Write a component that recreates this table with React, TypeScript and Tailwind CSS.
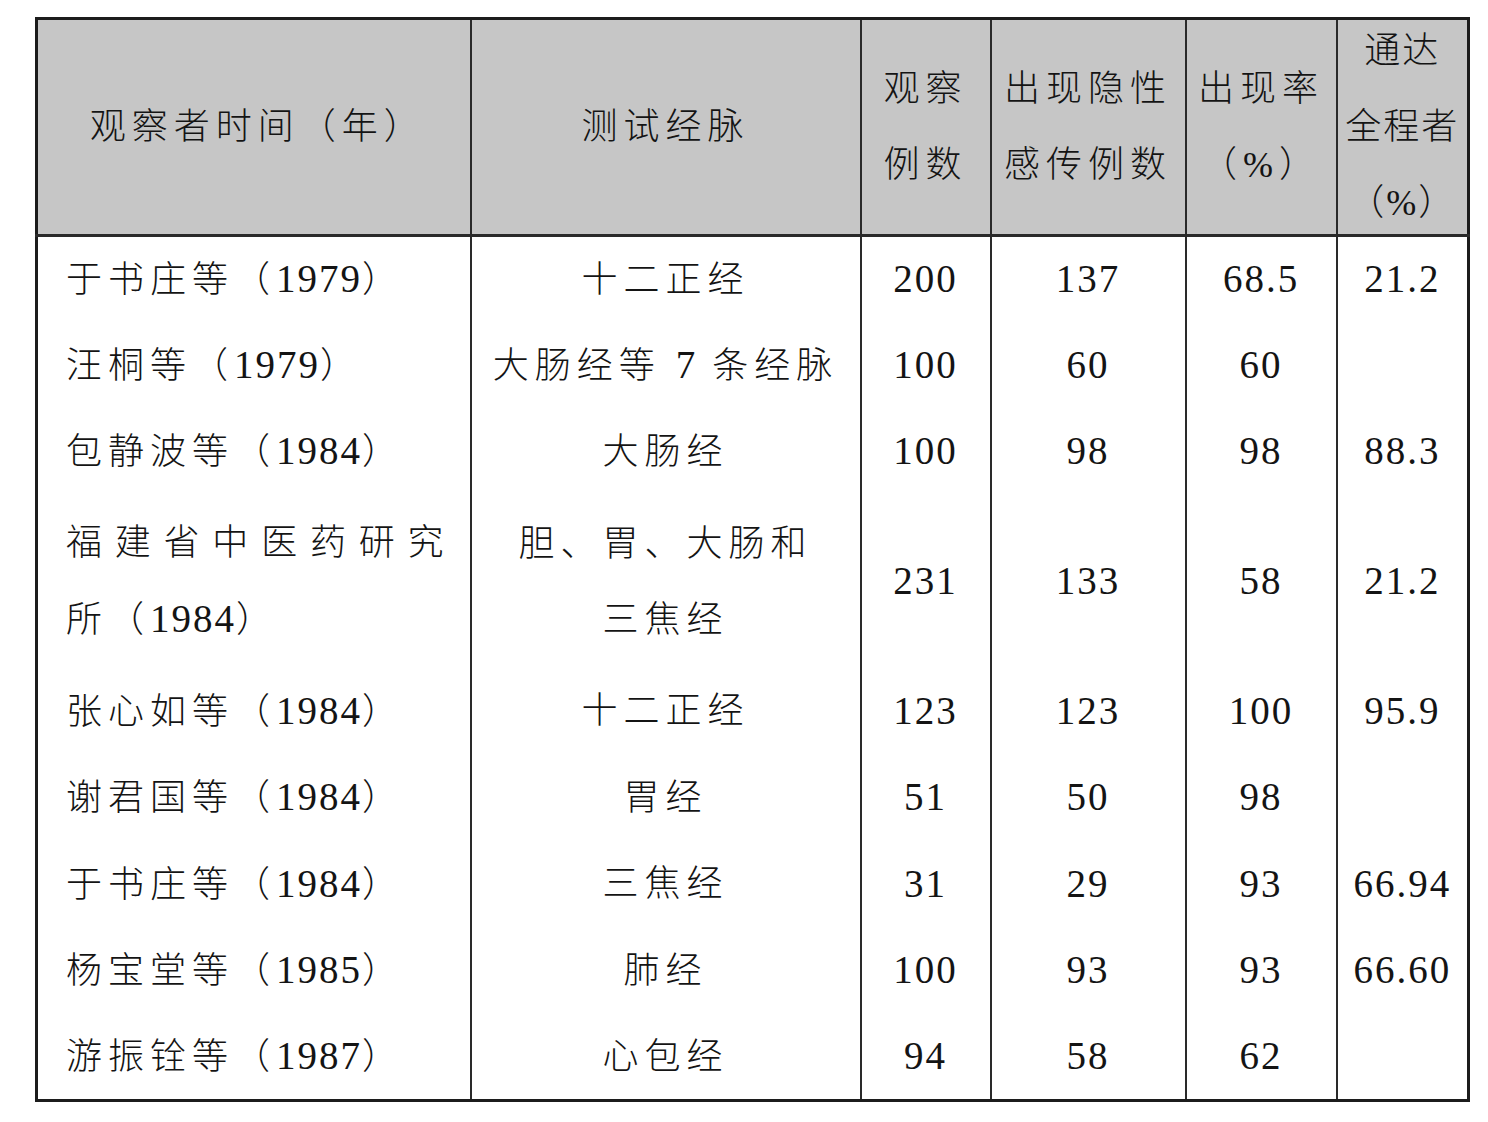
import React from "react";

function T({ s }: { s: string }) {
  const parts = s.split(/([0-9.]+)/);
  return (
    <>
      {parts.map((p, i) =>
        /^[0-9.]+$/.test(p) ? (
          <span key={i} className="font-normal text-[39px] tracking-[2px]">
            {p}
          </span>
        ) : (
          <span key={i}>{p}</span>
        )
      )}
    </>
  );
}

const rows: string[][] = [
  ["于书庄等（1979）", "十二正经", "200", "137", "68.5", "21.2"],
  ["汪桐等（1979）", "大肠经等 7 条经脉", "100", "60", "60", ""],
  ["包静波等（1984）", "大肠经", "100", "98", "98", "88.3"],
  ["DOUBLE"],
  ["张心如等（1984）", "十二正经", "123", "123", "100", "95.9"],
  ["谢君国等（1984）", "胃经", "51", "50", "98", ""],
  ["于书庄等（1984）", "三焦经", "31", "29", "93", "66.94"],
  ["杨宝堂等（1985）", "肺经", "100", "93", "93", "66.60"],
  ["游振铨等（1987）", "心包经", "94", "58", "62", ""],
];

const th =
  "bg-[#c6c6c6] border-x-2 border-b-[3px] border-[#2a2a2a] text-center align-middle font-light leading-[76px] p-0";
const td = "border-x-2 border-[#2a2a2a] text-center align-middle p-0 font-light leading-[76px]";

function H({ children }: { children: React.ReactNode }) {
  return <div className="h-[212px] flex flex-col justify-center items-center">{children}</div>;
}

export default function App() {
  return (
    <div className="min-h-screen bg-white pt-[17px] pl-[35px] font-['Liberation_Serif','Noto_Sans_CJK_SC',serif]">
      <table className="border-collapse table-fixed w-[1432px] border-[3px] border-[#1c1c1c] text-[36px] text-[#141414] tracking-[6px]">
        <colgroup>
          <col className="w-[434px]" />
          <col className="w-[390px]" />
          <col className="w-[130px]" />
          <col className="w-[195px]" />
          <col className="w-[151px]" />
          <col className="w-[132px]" />
        </colgroup>
        <thead>
          <tr className="h-[217px]">
            <th className={th}>
              <H>
                <span className="pl-[8px]">观察者时间（年）</span>
              </H>
            </th>
            <th className={th}>
              <H>测试经脉</H>
            </th>
            <th className={th}>
              <H>
                <div>观察</div>
                <div>例数</div>
              </H>
            </th>
            <th className={th}>
              <H>
                <div>出现隐性</div>
                <div>感传例数</div>
              </H>
            </th>
            <th className={th}>
              <H>
                <div>出现率</div>
                <div>（%）</div>
              </H>
            </th>
            <th className={th + " tracking-[2px]"}>
              <H>
                <div>通达</div>
                <div>全程者</div>
                <div>（%）</div>
              </H>
            </th>
          </tr>
        </thead>
        <tbody>
          {rows.map((r, i) =>
            r[0] === "DOUBLE" ? (
              <tr key={i} className="h-[173px]">
                <td className={td + " text-left pl-[28px] pr-[26px]"}>
                  <div className="text-justify [text-align-last:justify] tracking-[0px]">福建省中医药研究</div>
                  <div>
                    <T s="所（1984）" />
                  </div>
                </td>
                <td className={td}>
                  <div>胆、胃、大肠和</div>
                  <div>三焦经</div>
                </td>
                <td className={td}>
                  <T s="231" />
                </td>
                <td className={td}>
                  <T s="133" />
                </td>
                <td className={td}>
                  <T s="58" />
                </td>
                <td className={td}>
                  <T s="21.2" />
                </td>
              </tr>
            ) : (
              <tr key={i} className="h-[86.5px]">
                <td className={td + " text-left pl-[28px]"}>
                  <T s={r[0]} />
                </td>
                <td className={td}>
                  <T s={r[1]} />
                </td>
                <td className={td}>
                  <T s={r[2]} />
                </td>
                <td className={td}>
                  <T s={r[3]} />
                </td>
                <td className={td}>
                  <T s={r[4]} />
                </td>
                <td className={td}>
                  <T s={r[5]} />
                </td>
              </tr>
            )
          )}
        </tbody>
      </table>
    </div>
  );
}
